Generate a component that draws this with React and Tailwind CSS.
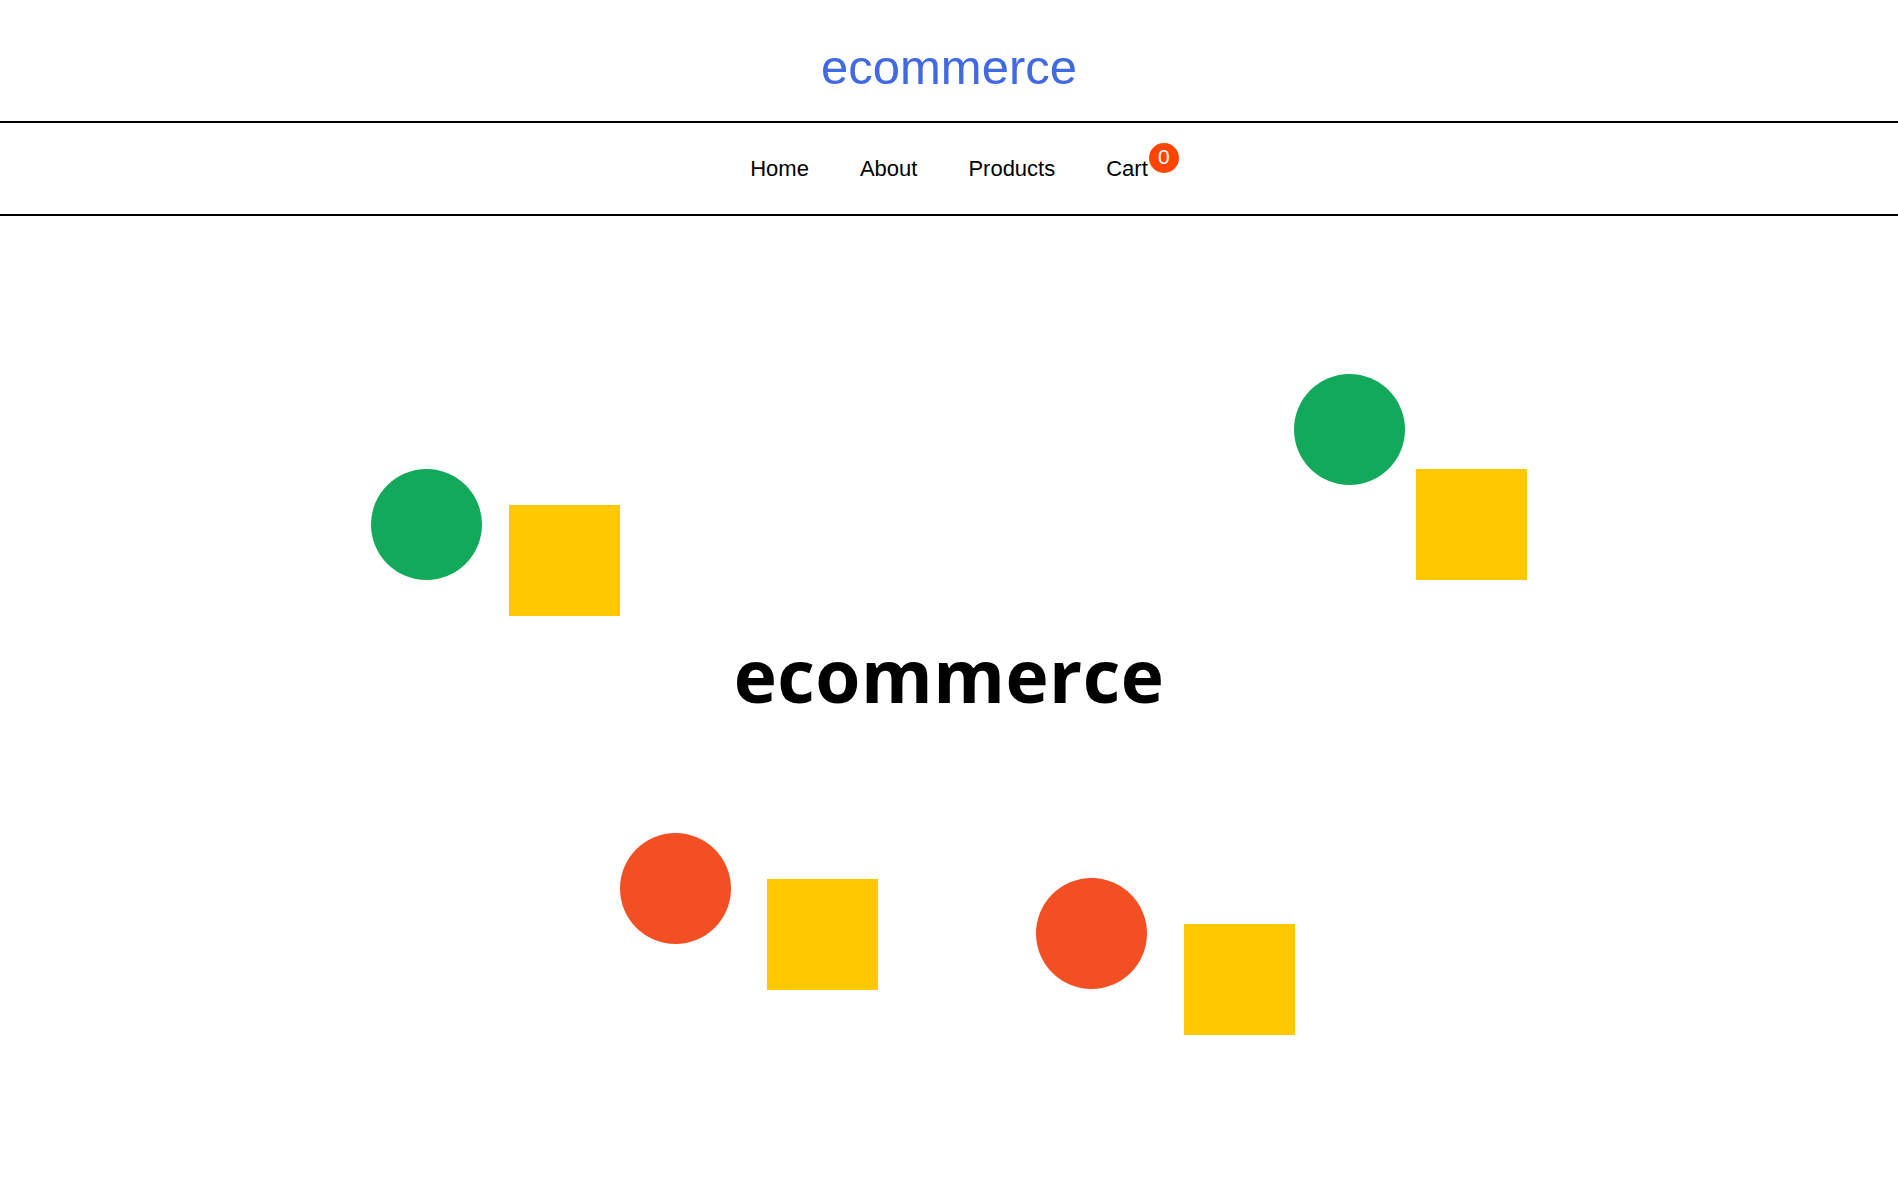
export default function App() {
  const shapes = [
    { kind: "circle", color: "bg-[#12a95a]", cls: "left-[371px] top-[253px]" },
    { kind: "square", color: "bg-[#ffc800]", cls: "left-[509px] top-[289px]" },
    { kind: "circle", color: "bg-[#12a95a]", cls: "left-[1294px] top-[158px]" },
    { kind: "square", color: "bg-[#ffc800]", cls: "left-[1416px] top-[253px]" },
    { kind: "circle", color: "bg-[#f25022]", cls: "left-[620px] top-[617px]" },
    { kind: "square", color: "bg-[#ffc800]", cls: "left-[767px] top-[663px]" },
    { kind: "circle", color: "bg-[#f25022]", cls: "left-[1036px] top-[662px]" },
    { kind: "square", color: "bg-[#ffc800]", cls: "left-[1184px] top-[708px]" },
  ];
  return (
    <div className="w-full min-h-[1197px] bg-white font-['Liberation_Sans',Arial,sans-serif] overflow-hidden">
      <header className="h-[121px] pt-[39px] text-center">
        <h1 className="text-[49px] leading-[56px] text-[#4169e1]">ecommerce</h1>
      </header>
      <nav className="h-[95px] border-y-2 border-black flex items-center justify-center">
        <ul className="flex gap-[51px] text-[22px] leading-[25px] text-black">
          <li>Home</li>
          <li>About</li>
          <li>Products</li>
          <li className="relative">
            Cart
            <span className="absolute left-[calc(100%+1px)] top-[-13px] w-[30px] h-[30px] rounded-full bg-[#ff4500] text-white text-[21px] leading-[27px] text-center">
              0
            </span>
          </li>
        </ul>
      </nav>
      <main className="relative h-[980px]">
        {shapes.map((s, i) => (
          <div
            key={i}
            className={`absolute w-[111px] h-[111px] ${s.color} ${s.cls} ${s.kind === "circle" ? "rounded-full" : ""}`}
          />
        ))}
        <div className="pt-[414px] text-center">
          <h2 className="font-['Open_Sans',sans-serif] font-bold text-[73px] leading-[90px] tracking-[0.5px] text-black">
            ecommerce
          </h2>
        </div>
      </main>
    </div>
  );
}
